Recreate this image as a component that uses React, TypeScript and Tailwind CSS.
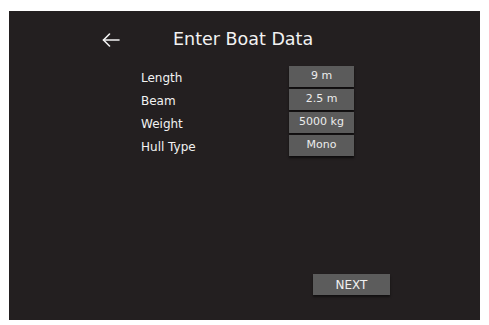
const rows = [
  { label: "Length", value: "9 m" },
  { label: "Beam", value: "2.5 m" },
  { label: "Weight", value: "5000 kg" },
  { label: "Hull Type", value: "Mono" },
];

export default function App() {
  return (
    <div className="w-[489px] h-[325px] bg-white pt-[11px] pl-[9px]" style={{ fontFamily: '"DejaVu Sans", Verdana, sans-serif' }}>
      <div className="w-[471px] h-[309px] bg-[#231f20] flex flex-col text-[#f2f2f2]">
        <div className="flex items-center h-[24px] mt-[17px]">
          <button className="ml-[93px] w-[18px] h-[18px] flex items-center justify-center">
            <svg width="18" height="14" viewBox="0 0 18 14" fill="none" stroke="#f2f2f2" strokeWidth="1.6" strokeLinecap="round" strokeLinejoin="round">
              <path d="M17 7H1.5" />
              <path d="M7.5 1L1.5 7l6 6" />
            </svg>
          </button>
          <h1 className="ml-[53px] text-[17.5px] leading-none">Enter Boat Data</h1>
        </div>

        <div className="flex flex-col gap-[2px] mt-[14px] ml-[132px]">
          {rows.map((r) => (
            <div key={r.label} className="flex items-center">
              <div className="w-[148px] text-[12px] pt-[2px]">{r.label}</div>
              <div className="w-[65px] h-[21px] bg-[#5b5b5b] shadow-[0_2px_2px_rgba(0,0,0,0.6)] flex items-center justify-center text-[11px] text-[#ececec]">
                {r.value}
              </div>
            </div>
          ))}
        </div>

        <div className="flex-1" />
        <button className="ml-[304px] mb-[25px] w-[77px] h-[21px] bg-[#5c5c5c] shadow-[0_2px_2px_rgba(0,0,0,0.5)] text-[12px] text-[#f0f0f0] flex items-center justify-center">
          NEXT
        </button>
      </div>
    </div>
  );
}
